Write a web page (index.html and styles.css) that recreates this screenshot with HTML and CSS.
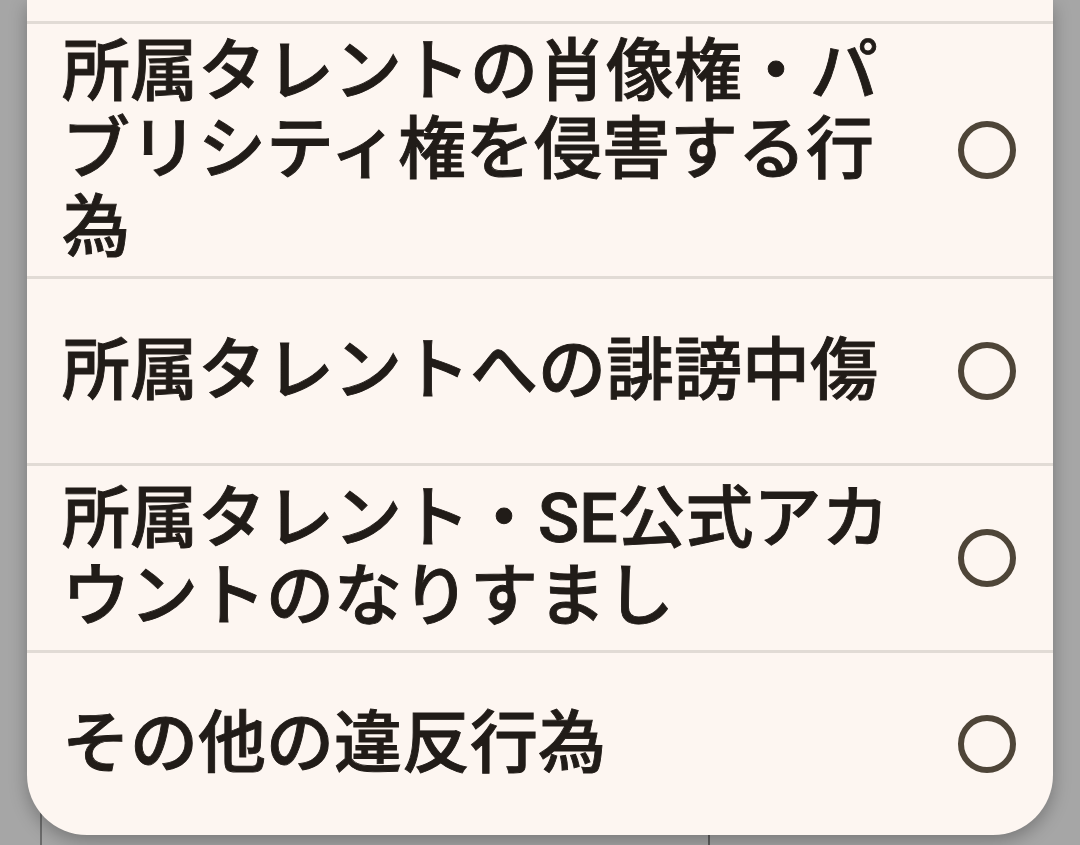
FILE: index.html
```html
<!DOCTYPE html>
<html lang="ja">
<head>
    <meta charset="UTF-8">
    <meta name="viewport" content="width=device-width, initial-scale=1.0">
    <title>通報理由の選択</title>
    <link rel="stylesheet" href="styles.css">
</head>
<body>
    <div class="page">
        <div class="table"></div>
    </div>
    <div class="dialog">
        <div class="top"></div>
        <label class="opcao">
            <span class="texto">所属タレントの肖像権・パブリシティ権を侵害する行為</span>
            <input type="radio" name="motivo">
            <span class="radio"></span>
        </label>
        <label class="opcao">
            <span class="texto">所属タレントへの誹謗中傷</span>
            <input type="radio" name="motivo">
            <span class="radio"></span>
        </label>
        <label class="opcao">
            <span class="texto">所属タレント・SE公式アカウントのなりすまし</span>
            <input type="radio" name="motivo">
            <span class="radio"></span>
        </label>
        <label class="opcao">
            <span class="texto">その他の違反行為</span>
            <input type="radio" name="motivo">
            <span class="radio"></span>
        </label>
    </div>
</body>
</html>
```

FILE: styles.css
```css
body {
    margin: 0;
    height: 845px;
    overflow: hidden;
    position: relative;
    background-color: #a6a6a6;
    font-family: Roboto, "Noto Sans CJK JP", sans-serif;
}
.page {
    height: 100%;
    padding-left: 40px;
}
.table {
    width: 666px;
    height: 100%;
    border-left: 2px solid #6c6c6c;
    border-right: 2px solid #5e5e5e;
}
.dialog {
    position: absolute;
    top: 0;
    left: 27px;
    width: 1026px;
    background-color: #fdf6f1;
    border-radius: 0 0 60px 60px;
    box-shadow: 0 6px 18px rgba(0, 0, 0, 0.28);
}
.top {
    height: 21px;
}
.opcao {
    display: flex;
    align-items: center;
    gap: 52px;
    min-height: 187px;
    padding: 9px 37px 9px 35px;
    box-sizing: border-box;
    border-top: 3px solid #e1dbd5;
    cursor: pointer;
}
.opcao:last-child {
    min-height: 185px;
}
.texto {
    flex: 1;
    font-size: 68px;
    line-height: 78px;
    font-weight: 500;
    color: #211c18;
    -webkit-text-stroke: 0.9px #211c18;
    line-break: strict;
}
.opcao input {
    display: none;
}
.radio {
    width: 46px;
    height: 46px;
    border: 6px solid #4e4538;
    border-radius: 50%;
    flex-shrink: 0;
}
```
